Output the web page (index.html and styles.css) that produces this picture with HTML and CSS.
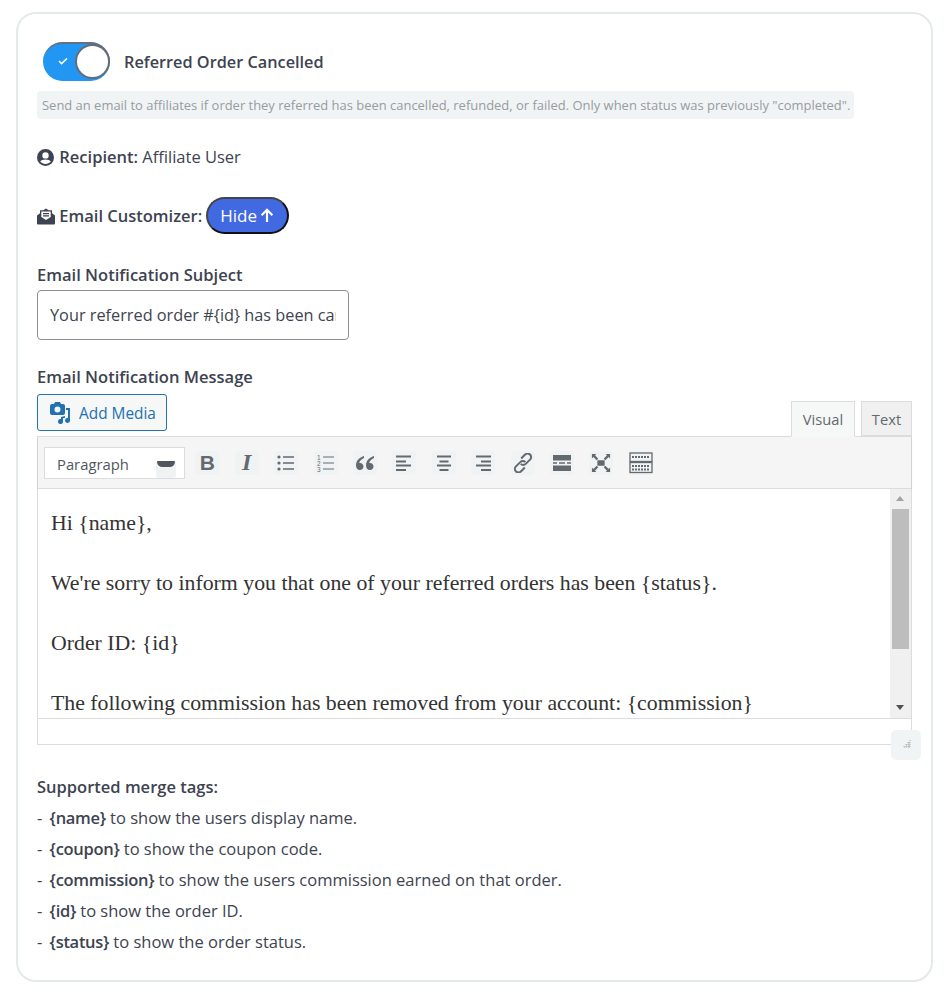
FILE: index.html
```html
<!DOCTYPE html>
<html lang="en">
<head>
  <meta charset="UTF-8">
  <title>Referred Order Cancelled</title>
  <link rel="stylesheet" href="styles.css">
</head>
<body>
  <div class="card">
    <div class="toggle-row">
      <span class="toggle">
        <svg class="toggle-check" viewBox="0 0 10 8"><path d="M1 4l2.600 2.600L9 1.400" fill="none" stroke="#fff" stroke-width="1.500"/></svg>
        <span class="toggle-knob"></span>
      </span>
      <span class="toggle-label">Referred Order Cancelled</span>
    </div>
    <div class="hint">Send an email to affiliates if order they referred has been cancelled, refunded, or failed. Only when status was previously "completed".</div>

    <div class="recipient">
      <svg class="line-icon" viewBox="0 0 18 17"><path fill="#3d4350" d="M8.500 0a8.500 8.500 0 1 0 0 17 8.500 8.500 0 0 0 0-17zm0 3.200a3.200 3.200 0 1 1 0 6.400 3.200 3.200 0 0 1 0-6.400zm0 11.900c-2.100 0-4-1-5.300-2.500.6-1.200 2.900-2 5.300-2s4.700.8 5.300 2c-1.300 1.500-3.200 2.500-5.300 2.500z"/></svg>
      <strong>Recipient:</strong> Affiliate User
    </div>

    <div class="customizer">
      <svg class="line-icon" viewBox="0 0 18 16"><path fill="#3d4350" d="M9 0l2.600 1.800H15v3l3 2.200v8a1 1 0 0 1-1 1H1a1 1 0 0 1-1-1V7l3-2.200v-3h3.400zM4.300 3v5.600L9 11.500l4.700-2.900V3zM6 4.500h6v1.200H6zm0 2.200h6v1.200H6z"/></svg>
      <strong>Email Customizer:</strong>
      <button class="hide-btn">Hide
        <svg class="hide-arrow" viewBox="0 0 14 15"><path d="M7 14V2M1.600 7.200L7 1.800l5.400 5.400" fill="none" stroke="#fff" stroke-width="2.200"/></svg>
      </button>
    </div>

    <label class="field-label">Email Notification Subject</label>
    <input class="subject" type="text" value="Your referred order #{id} has been cancelled">

    <label class="field-label message-label">Email Notification Message</label>
    <div class="editor-head">
      <button class="add-media">
        <svg class="media-icon" viewBox="0 0 22 22"><path fill="#2271b1" d="M3 2h2l1-2h5l1 2h2a2 2 0 0 1 2 2v7a2 2 0 0 1-2 2H3a2 2 0 0 1-2-2V4a2 2 0 0 1 2-2zm5.500 2.500a3 3 0 1 0 0 6 3 3 0 0 0 0-6z"/><path fill="#2271b1" d="M21 6v12.500a2.500 2.500 0 1 1-2-2.400V8h-2V6zM12 15l4-1v1.800l-2 .5v3.200a2.500 2.500 0 1 1-2-2.400z"/></svg>
        <span class="add-media-text">Add Media</span>
      </button>
      <div class="tabs">
        <span class="tab active">Visual</span>
        <span class="tab">Text</span>
      </div>
    </div>

    <div class="editor">
      <div class="toolbar">
        <div class="format-select">Paragraph<span class="select-arrow"></span></div>
        <span class="tool bold">B</span>
        <span class="tool italic">I</span>
        <span class="tool"><svg viewBox="0 0 20 20"><path d="M7 4h11M7 10h11M7 16h11" stroke="#646970" stroke-width="1.400"/><circle cx="3" cy="4" r="1.600" fill="#646970"/><circle cx="3" cy="10" r="1.600" fill="#646970"/><circle cx="3" cy="16" r="1.600" fill="#646970"/></svg></span>
        <span class="tool"><svg viewBox="0 0 20 20"><path d="M7 4h11M7 10h11M7 16h11" stroke="#646970" stroke-width="1.200"/><text x="1" y="6.500" class="num">1</text><text x="1" y="12.500" class="num">2</text><text x="1" y="18.500" class="num">3</text></svg></span>
        <span class="tool"><svg viewBox="0 0 20 20"><path fill="#646970" d="M9 3C5.500 4 1 7 1 12.500 1 15 2.500 17 4.800 17S8.500 15.400 8.500 13.500 7 10 5 10c-.4 0-.6 0-.8.100C4.500 8 6.500 6 9 5zM19 3c-3.500 1-8 4-8 9.500 0 2.500 1.500 4.500 3.800 4.500s3.700-1.600 3.700-3.500S17 10 15 10c-.4 0-.6 0-.8.100.3-2.100 2.300-4.100 4.800-5.100z"/></svg></span>
        <span class="tool"><svg viewBox="0 0 20 20"><path d="M2 3.500h15M2 8.500h10M2 12.500h15M2 17h10" stroke="#646970" stroke-width="1.800"/></svg></span>
        <span class="tool"><svg viewBox="0 0 20 20"><path d="M3 3.500h14M5.500 8.500h9M3 12.500h14M5.500 17h9" stroke="#646970" stroke-width="1.800"/></svg></span>
        <span class="tool"><svg viewBox="0 0 20 20"><path d="M3 3.500h15M8 8.500h10M3 12.500h15M8 17h10" stroke="#646970" stroke-width="1.800"/></svg></span>
        <span class="tool"><svg viewBox="0 0 22 22"><g fill="none" stroke="#646970" stroke-width="2.200"><path d="M9 6l4-4a3.800 3.800 0 0 1 6 5l-5 5a3.800 3.800 0 0 1-5.500 0"/><path d="M13 16l-4 4a3.800 3.800 0 0 1-6-5l5-5a3.800 3.800 0 0 1 5.500 0"/></g></svg></span>
        <span class="tool"><svg viewBox="0 0 20 20"><path fill="#646970" d="M1 2h18v5.500H1zM1 12.500h18V18H1zM1 9.300h4v1.400H1zm6 0h6v1.400H7zm8 0h4v1.400h-4z"/></svg></span>
        <span class="tool"><svg viewBox="0 0 22 22"><path fill="#646970" d="M7 8h8v6H7zM1 1h5L4.400 2.600 8 6.200 6.200 8 2.600 4.400 1 6zM21 1v5l-1.600-1.600L15.800 8 14 6.200l3.600-3.600L16 1zM1 21v-5l1.600 1.600L6.200 14 8 15.800l-3.600 3.600L6 21zM21 21h-5l1.600-1.600L14 15.800l1.800-1.800 3.600 3.600L21 16z"/></svg></span>
        <span class="tool wide"><svg viewBox="0 0 24 22"><g fill="none" stroke="#646970" stroke-width="1.300"><rect x="1" y="1" width="22" height="8.500"/><rect x="1" y="10.500" width="22" height="10"/></g><path d="M3 5h18M3 14h18M3 17.500h18" stroke="#646970" stroke-width="2" stroke-dasharray="2 1"/></svg></span>
      </div>
      <div class="content-wrap">
        <div class="content">
          <p>Hi {name},</p>
          <p>We're sorry to inform you that one of your referred orders has been {status}.</p>
          <p>Order ID: {id}</p>
          <p>The following commission has been removed from your account: {commission}</p>
        </div>
        <div class="scrollbar">
          <span class="arrow-up"></span>
          <span class="thumb"></span>
          <span class="arrow-down"></span>
        </div>
      </div>
      <div class="statusbar"></div>
      <span class="resize-handle">
        <svg viewBox="0 0 10 10"><path d="M8 2v1M6 4v1h2V4M4 6v1h1M6 6v1h2V6M2 8v1h1M4 8v1h1M6 8v1h2V8" stroke="#a9adb0" stroke-width="1" fill="none"/></svg>
      </span>
    </div>

    <div class="tags">
      <div class="tags-title">Supported merge tags:</div>
      <div>- <strong>{name}</strong> to show the users display name.</div>
      <div>- <strong>{coupon}</strong> to show the coupon code.</div>
      <div>- <strong>{commission}</strong> to show the users commission earned on that order.</div>
      <div>- <strong>{id}</strong> to show the order ID.</div>
      <div>- <strong>{status}</strong> to show the order status.</div>
    </div>
  </div>
</body>
</html>
```

FILE: styles.css
```css
* {
  box-sizing: border-box;
}

body {
  margin: 0;
  background-color: #fff;
  font-family: 'Open Sans', 'Noto Sans', sans-serif;
  font-size: 16.500px;
  color: #3d4350;
}

strong {
  font-weight: 600;
}

.card {
  width: 917px;
  height: 970px;
  margin: 12px 0 0 16px;
  padding: 28px 19px 0 19px;
  border: 2px solid #e4e9e9;
  border-radius: 20px;
  background-color: #fff;
}

.toggle-row {
  display: flex;
  align-items: center;
  gap: 14px;
  padding-left: 6px;
}

.toggle {
  position: relative;
  display: block;
  width: 67px;
  height: 39px;
  border-radius: 20px;
  background-color: #2196f3;
  border-top: 2px solid #5f7183;
}

.toggle-check {
  position: absolute;
  left: 15px;
  top: 13px;
  width: 10px;
  height: 8px;
}

.toggle-knob {
  position: absolute;
  right: 2px;
  top: 2px;
  width: 31px;
  height: 31px;
  border-radius: 50%;
  background-color: #fff;
  box-shadow: 0 0 0 2px #666c76;
}

.toggle-label {
  font-size: 16.300px;
  font-weight: 600;
}

.hint {
  display: inline-block;
  margin-top: 10px;
  padding: 0 4px 0 5px;
  height: 28px;
  line-height: 29px;
  border-radius: 4px;
  background-color: #f1f4f5;
  color: #979ba2;
  font-size: 12.960px;
  white-space: nowrap;
}

.recipient {
  margin-top: 25px;
  height: 26px;
  line-height: 26px;
  display: block;
}

.line-icon {
  width: 18px;
  height: 17px;
  vertical-align: -3px;
}

.customizer {
  margin-top: 27px;
  height: 38px;
  line-height: 38px;
}

.hide-btn {
  display: inline-flex;
  align-items: center;
  justify-content: center;
  gap: 3px;
  width: 83px;
  height: 37px;
  margin-left: -1px;
  padding: 0;
  vertical-align: top;
  border: 2px solid #111;
  border-top-color: #444;
  border-left-color: #444;
  border-radius: 19px;
  background-color: #4169e1;
  color: #fff;
  font-family: inherit;
  font-size: 17px;
}

.hide-arrow {
  width: 14px;
  height: 15px;
}

.field-label {
  display: block;
  margin-top: 28px;
  height: 24px;
  line-height: 24px;
  font-size: 16.550px;
  font-weight: 600;
}

.subject {
  display: block;
  width: 312px;
  height: 50px;
  margin-top: 3px;
  padding: 0 12px;
  border: 1px solid #8c8f94;
  border-radius: 4px;
  color: #3d4350;
  font-family: inherit;
  font-size: 16.300px;
}

.message-label {
  margin-top: 25px;
}

.editor-head {
  display: flex;
  justify-content: space-between;
  align-items: flex-end;
  height: 42px;
  margin-top: 5px;
  position: relative;
  z-index: 1;
}

.add-media {
  display: flex;
  align-items: center;
  gap: 8px;
  width: 130px;
  height: 37px;
  margin-bottom: 5px;
  padding: 0 0 0 11px;
  border: 1px solid #2271b1;
  border-radius: 3px;
  background-color: #f6f7f7;
  color: #2271b1;
  font-family: inherit;
  font-size: 15.400px;
}

.add-media-text {
  padding-top: 2px;
}

.media-icon {
  width: 22px;
  height: 22px;
}

.tabs {
  display: flex;
  gap: 6px;
}

.tab {
  display: block;
  width: 51px;
  height: 35px;
  line-height: 35px;
  text-align: center;
  border: 1px solid #dcdcde;
  background-color: #f0f0f1;
  color: #646970;
  font-size: 14.700px;
}

.tab.active {
  width: 64px;
  height: 36px;
  margin-bottom: -1px;
  background-color: #f6f7f7;
  border-bottom-color: #f6f7f7;
}

.editor {
  position: relative;
  border: 1px solid #dcdcde;
  border-top: 0;
}

.toolbar {
  display: flex;
  align-items: center;
  height: 53px;
  padding-left: 6px;
  border-top: 1px solid #dcdcde;
  border-bottom: 1px solid #dcdcde;
  background-color: #f5f5f5;
  box-shadow: 0 1px 2px rgba(0, 0, 0, 0.12);
}

.format-select {
  position: relative;
  width: 141px;
  height: 32px;
  margin-right: 3px;
  padding-left: 12px;
  line-height: 33px;
  border: 1px solid #dcdcde;
  background-color: #fff;
  color: #50575e;
  font-size: 14.800px;
}

/* tinted box with the dark caret on top of it */
.select-arrow {
  position: absolute;
  right: 8px;
  top: 13px;
  width: 20px;
  height: 17px;
  border-radius: 3px;
  background-color: #f0f3f4;
}

.select-arrow::before {
  content: "";
  position: absolute;
  left: 1px;
  top: 0;
  width: 18px;
  height: 6px;
  background-color: #50575e;
  border-radius: 1px 1px 8px 8px;
}

.tool {
  display: flex;
  align-items: center;
  justify-content: center;
  width: 24px;
  height: 24px;
  margin: 0 8px 0 7.400px;
  border-radius: 3px;
  background-color: #f0f3f4;
  color: #646970;
}

.tool svg {
  width: 20px;
  height: 20px;
}

.tool.wide svg {
  width: 24px;
  height: 22px;
}

.tool.bold {
  font-family: 'Liberation Sans', sans-serif;
  font-size: 21px;
  font-weight: 700;
}

.tool.italic {
  font-family: 'Liberation Serif', serif;
  font-size: 24px;
  font-style: italic;
  font-weight: 700;
}

.num {
  font-family: 'Liberation Sans', sans-serif;
  font-size: 6.500px;
  fill: #646970;
}

.content-wrap {
  display: flex;
  height: 229px;
  background-color: #fff;
}

.content {
  flex: 1;
  padding: 4px 0 0 13px;
  overflow: hidden;
  font-family: 'Liberation Serif', serif;
  font-size: 21.800px;
  color: #333;
}

.content p {
  margin: 0;
  height: 60px;
  line-height: 60px;
  white-space: nowrap;
}

.scrollbar {
  position: relative;
  width: 21px;
  background-color: #f0f0f0;
}

.thumb {
  position: absolute;
  left: 2px;
  top: 20px;
  width: 17px;
  height: 140px;
  background-color: #bdbdbd;
}

.arrow-up,
.arrow-down {
  position: absolute;
  left: 6px;
  width: 0;
  height: 0;
  border-left: 4.500px solid transparent;
  border-right: 4.500px solid transparent;
}

.arrow-up {
  top: 7px;
  border-bottom: 5px solid #a3a3a3;
}

.arrow-down {
  bottom: 8px;
  border-top: 5px solid #505050;
}

.statusbar {
  height: 26px;
  border-top: 1px solid #dcdcde;
  background-color: #fff;
}

.resize-handle {
  position: absolute;
  right: -10px;
  bottom: -16px;
  width: 30px;
  height: 30px;
  padding: 8px 9px 12px 11px;
  border-radius: 5px;
  background-color: #f1f4f5;
}

.resize-handle svg {
  display: block;
  width: 10px;
  height: 10px;
}

.tags {
  margin-top: 26px;
}

.tags div {
  height: 31px;
  line-height: 31px;
}

.tags strong {
  margin-left: 3px;
  letter-spacing: -0.3px;
}

.tags-title {
  font-weight: 600;
}
```
